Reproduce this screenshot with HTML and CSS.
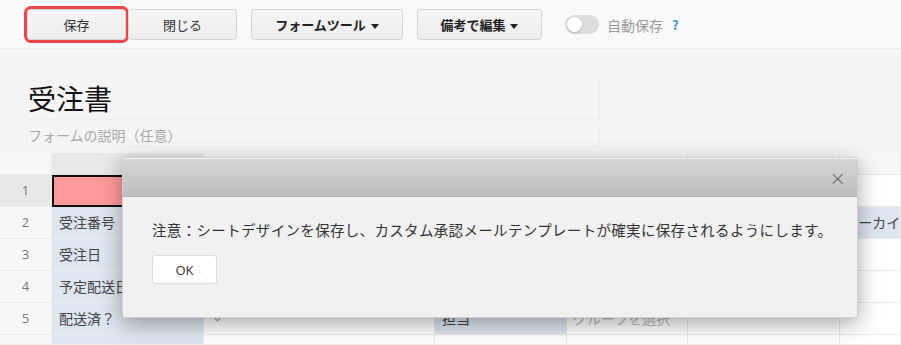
FILE: index.html
```html
<!DOCTYPE html>
<html lang="ja">
  <head>
    <meta charset="UTF-8">
    <title>受注書</title>
    <link rel="stylesheet" href="styles.css">
  </head>
  <body>
    <div class="toolbar">
      <button class="btn btn-save">保存</button>
      <button class="btn btn-close">閉じる</button>
      <button class="btn btn-menu btn-tools">フォームツール <span class="caret"></span></button>
      <button class="btn btn-menu btn-notes">備考で編集 <span class="caret"></span></button>
      <div class="autosave">
        <span class="switch"><span class="knob"></span></span>
        <span class="autosave-label">自動保存</span>
        <span class="help">?</span>
      </div>
    </div>

    <div class="form-head">
      <div class="title-box">受注書</div>
      <div class="desc-box">フォームの説明（任意）</div>
    </div>

    <div class="sheet">
      <div class="row head-row">
        <div class="cell num"></div>
        <div class="cell c1 head-a"></div>
        <div class="cell c2"></div>
        <div class="cell c3"></div>
        <div class="cell c4"></div>
        <div class="cell c5"></div>
        <div class="cell c6"></div>
      </div>
      <div class="row">
        <div class="cell num num-active">1</div>
        <div class="cell c1 selected"></div>
        <div class="cell c2"></div>
        <div class="cell c3"></div>
        <div class="cell c4"></div>
        <div class="cell c5"></div>
        <div class="cell c6"></div>
      </div>
      <div class="row">
        <div class="cell num">2</div>
        <div class="cell c1 label">受注番号</div>
        <div class="cell c2"></div>
        <div class="cell c3"></div>
        <div class="cell c4"></div>
        <div class="cell c5"></div>
        <div class="cell c6 label overflow">アーカイ</div>
      </div>
      <div class="row">
        <div class="cell num">3</div>
        <div class="cell c1 label">受注日</div>
        <div class="cell c2"></div>
        <div class="cell c3"></div>
        <div class="cell c4"></div>
        <div class="cell c5"></div>
        <div class="cell c6"></div>
      </div>
      <div class="row">
        <div class="cell num">4</div>
        <div class="cell c1 label">予定配送日</div>
        <div class="cell c2"></div>
        <div class="cell c3"></div>
        <div class="cell c4"></div>
        <div class="cell c5"></div>
        <div class="cell c6"></div>
      </div>
      <div class="row">
        <div class="cell num">5</div>
        <div class="cell c1 label">配送済？</div>
        <div class="cell c2"><span class="chev"></span></div>
        <div class="cell c3 label">担当</div>
        <div class="cell c4 placeholder">グループを選択</div>
        <div class="cell c5"></div>
        <div class="cell c6"></div>
      </div>
      <div class="row last-row">
        <div class="cell num"></div>
        <div class="cell c1 label"></div>
        <div class="cell c2"></div>
        <div class="cell c3"></div>
        <div class="cell c4"></div>
        <div class="cell c5"></div>
        <div class="cell c6"></div>
      </div>
    </div>

    <!-- notice dialog -->
    <div class="dialog">
      <div class="dialog-bar">
        <span class="dialog-x">&times;</span>
      </div>
      <div class="dialog-body">
        <p>注意：シートデザインを保存し、カスタム承認メールテンプレートが確実に保存されるようにします。</p>
        <button class="btn-ok">OK</button>
      </div>
    </div>
  </body>
</html>
```

FILE: styles.css
```css
body {
  margin: 0;
  background: #f5f5f5;
  font-family: "Noto Sans CJK JP", "Noto Sans", sans-serif;
  color: #333;
  overflow: hidden;
  height: 345px;
  position: relative;
}

.toolbar {
  display: flex;
  align-items: center;
  height: 49px;
  padding-left: 27px;
  background: #f9f9f9;
  border-bottom: 1px solid #ececec;
  box-sizing: border-box;
}

.btn {
  height: 31px;
  border: 1px solid #d6d6d6;
  border-radius: 3px;
  background: linear-gradient(#f6f6f6, #ededed);
  font-family: inherit;
  font-size: 13px;
  color: #333;
  padding: 0;
  margin-top: 1px;
}

.btn-save {
  width: 99px;
  outline: 3px solid #ec4646;
  outline-offset: 0;
  border-radius: 4px;
}

.btn-close {
  width: 109px;
  margin-left: 2px;
}

.btn-menu {
  font-weight: bold;
  color: #222;
}

.btn-tools {
  width: 152px;
  margin-left: 14px;
}

.btn-notes {
  width: 125px;
  margin-left: 14px;
}

.caret {
  display: inline-block;
  width: 0;
  height: 0;
  border-left: 4px solid transparent;
  border-right: 4px solid transparent;
  border-top: 5px solid #222;
  vertical-align: middle;
  margin-left: 2px;
}

.autosave {
  display: flex;
  align-items: center;
  margin-left: 23px;
  margin-top: 1px;
}

.switch {
  width: 34px;
  height: 19px;
  border-radius: 10px;
  background: #dcdcdc;
  position: relative;
}

.knob {
  position: absolute;
  left: 2px;
  top: 2px;
  width: 15px;
  height: 15px;
  border-radius: 50%;
  background: #fff;
  box-shadow: 0 1px 2px rgba(0, 0, 0, 0.2);
}

.autosave-label {
  margin-left: 8px;
  font-size: 14px;
  color: #999;
}

.help {
  margin-left: 9px;
  font-size: 13px;
  font-weight: bold;
  color: #3d8fd6;
}

.form-head {
  padding: 28px 0 0 26px;
  height: 104px;
  box-sizing: border-box;
}

.title-box {
  width: 574px;
  height: 43px;
  border: 1px solid #efefef;
  box-sizing: border-box;
  font-size: 28px;
  line-height: 41px;
  color: #111;
  padding-left: 1px;
}

.desc-box {
  width: 574px;
  height: 24px;
  margin-top: 3px;
  border: 1px solid #f0f0f0;
  box-sizing: border-box;
  font-size: 14px;
  line-height: 22px;
  color: #aaa;
  padding-left: 1px;
}

.sheet {
  background: #fff;
}

.row {
  display: flex;
  height: 32px;
}

.head-row {
  height: 22px;
  background: #f7f7f7;
}

.last-row {
  height: 10px;
}

.cell {
  box-sizing: border-box;
  border-right: 1px solid #ececec;
  border-bottom: 1px solid #ececec;
  font-size: 14px;
  line-height: 31px;
  white-space: nowrap;
  overflow: hidden;
}

.head-row .cell {
  border-bottom: 1px solid #e6e6e6;
}

.num {
  width: 52px;
  text-align: center;
  color: #777;
  background: #f7f7f7;
  font-family: "Open Sans", sans-serif;
  font-size: 13px;
}

.num-active {
  background: #e8e8e8;
}

.c1 { width: 152px; }
.c2 { width: 231px; }
.c3 { width: 132px; }
.c4 { width: 121px; }
.c5 { width: 152px; }
.c6 { width: 61px; }

.head-a {
  background: #e8e8e8;
}

.selected {
  background: #ff9a9c;
  border: 2px solid #111;
}

.label {
  background: #dee6f1;
  padding-left: 7px;
  color: #444;
}

.overflow {
  padding-left: 5px;
}

.placeholder {
  color: #bbb;
  padding-left: 6px;
}

.chev {
  display: inline-block;
  width: 6px;
  height: 6px;
  border-right: 1.5px solid #999;
  border-bottom: 1.5px solid #999;
  transform: rotate(45deg);
  margin-left: 10px;
  vertical-align: 4px;
}

.dialog {
  position: absolute;
  left: 122px;
  top: 157px;
  width: 736px;
  height: 161px;
  background: #f1f1f1;
  border: 1px solid #d0d0d0;
  border-radius: 3px;
  box-sizing: border-box;
  box-shadow: 0 6px 22px rgba(0, 0, 0, 0.35);
  overflow: hidden;
}

.dialog-bar {
  height: 37px;
  background: linear-gradient(#d6d6d6, #bdbdbd);
  border-top: 1px solid #f4f4f4;
  border-bottom: 1px solid #b5b5b5;
  display: flex;
  justify-content: flex-end;
  align-items: center;
  padding-right: 11px;
}

.dialog-x {
  font-family: "DejaVu Sans", sans-serif;
  font-size: 20px;
  font-weight: 300;
  color: #666;
  line-height: 1;
}

.dialog-body {
  padding: 22px 0 0 29px;
}

.dialog-body p {
  margin: 0;
  font-size: 14.5px;
  color: #333;
  letter-spacing: 0.33px;
}

.btn-ok {
  margin-top: 15px;
  width: 65px;
  height: 29px;
  border: 1px solid #dcdcdc;
  border-radius: 3px;
  background: #fff;
  font-family: "Open Sans", sans-serif;
  font-size: 13px;
  color: #333;
}
```
